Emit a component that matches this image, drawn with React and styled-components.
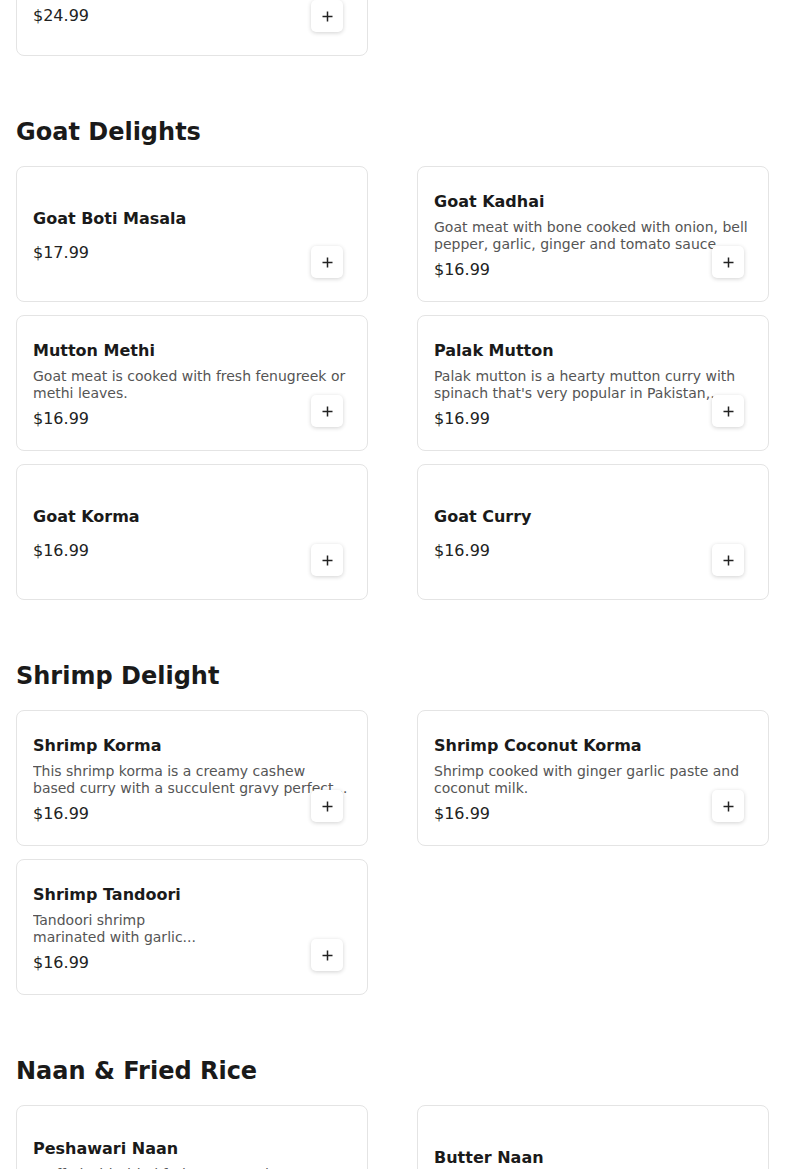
import styled, { createGlobalStyle } from "styled-components";

const GlobalStyle = createGlobalStyle`
  body {
    margin: 0;
    background: #ffffff;
    font-family: "DejaVu Sans", "Liberation Sans", sans-serif;
    color: #1a1a1a;
  }
  #root {
    overflow: hidden;
    height: 100vh;
  }
`;

const menu = [
  {
    title: "Chicken Specials",
    hideTitle: true,
    items: [{ name: "Chicken Tikka Masala Family Platter", desc: "", price: "24.99" }],
  },
  {
    title: "Goat Delights",
    items: [
      { name: "Goat Boti Masala", desc: "", price: "17.99" },
      {
        name: "Goat Kadhai",
        desc: "Goat meat with bone cooked with onion, bell pepper, garlic, ginger and tomato sauce.",
        price: "16.99",
      },
      {
        name: "Mutton Methi",
        desc: "Goat meat is cooked with fresh fenugreek or methi leaves.",
        price: "16.99",
      },
      {
        name: "Palak Mutton",
        desc: "Palak mutton is a hearty mutton curry with spinach that's very popular in Pakistan, Bangladesh and India.",
        price: "16.99",
      },
      { name: "Goat Korma", desc: "", price: "16.99" },
      { name: "Goat Curry", desc: "", price: "16.99" },
    ],
  },
  {
    title: "Shrimp Delight",
    items: [
      {
        name: "Shrimp Korma",
        desc: "This shrimp korma is a creamy cashew based curry with a succulent gravy perfect for rice or naan.",
        price: "16.99",
      },
      {
        name: "Shrimp Coconut Korma",
        desc: "Shrimp cooked with ginger garlic paste and coconut milk.",
        price: "16.99",
      },
      {
        name: "Shrimp Tandoori",
        desc: "Tandoori shrimp marinated with garlic...",
        price: "16.99",
        narrow: true,
      },
    ],
  },
  {
    title: "Naan & Fried Rice",
    items: [
      { name: "Peshawari Naan", desc: "Stuffed with dried fruits, nuts and coconut.", price: "3.99" },
      { name: "Butter Naan", desc: "", price: "2.99" },
    ],
  },
];

const Page = styled.main`
  padding: 0 16px;
  margin-top: -80px;
`;

const Section = styled.section`
  margin-top: ${(p) => (p.$first ? "0" : "62px")};
`;

const Heading = styled.h2`
  margin: 0 0 20px;
  font-size: 24px;
  line-height: 28px;
  font-weight: 700;
  color: #1a1a1a;
`;

const Grid = styled.div`
  display: grid;
  grid-template-columns: 1fr 1fr;
  column-gap: 49px;
  row-gap: 13px;
`;

const Card = styled.div`
  position: relative;
  box-sizing: border-box;
  height: 136px;
  padding: 0 16px;
  border: 1px solid #e4e4e4;
  border-radius: 8px;
  background: #fff;
  display: flex;
  align-items: center;
`;

const Info = styled.div`
  flex: 1;
  min-width: 0;
  padding-top: 2px;
`;

const Name = styled.h3`
  margin: 0 0 8px;
  font-size: 16px;
  line-height: 19px;
  font-weight: 700;
  color: #1a1a1a;
`;

const Desc = styled.p`
  margin: 0 0 7px;
  font-size: 14px;
  line-height: 17px;
  color: #555555;
  max-width: ${(p) => (p.$narrow ? "175px" : "none")};
  display: -webkit-box;
  -webkit-line-clamp: 2;
  -webkit-box-orient: vertical;
  overflow: hidden;
`;

const Price = styled.div`
  font-size: 16px;
  line-height: 19px;
  color: #222;
`;

const AddButton = styled.button`
  position: absolute;
  right: 24px;
  bottom: 23px;
  width: 32px;
  height: 32px;
  padding: 0;
  border: none;
  border-radius: 5px;
  background: #fff;
  box-shadow: 0 1px 4px rgba(0, 0, 0, 0.18);
  display: flex;
  align-items: center;
  justify-content: center;
  cursor: pointer;
`;

const PlusIcon = () => (
  <svg width="11" height="11" viewBox="0 0 11 11">
    <path d="M5.5 0.5v10M0.5 5.5h10" stroke="#222" strokeWidth="1.5" fill="none" />
  </svg>
);

const MenuCard = ({ name, desc, price, narrow }) => (
  <Card>
    <Info>
      <Name>{name}</Name>
      <Desc $narrow={narrow}>{desc}</Desc>
      <Price>${price}</Price>
    </Info>
    <AddButton aria-label={`Add ${name}`}>
      <PlusIcon />
    </AddButton>
  </Card>
);

export default function App() {
  return (
    <>
      <GlobalStyle />
      <Page>
        {menu.map((section, i) => (
          <Section key={section.title} $first={i === 0}>
            {!section.hideTitle && <Heading>{section.title}</Heading>}
            <Grid>
              {section.items.map((item) => (
                <MenuCard key={item.name} {...item} />
              ))}
            </Grid>
          </Section>
        ))}
      </Page>
    </>
  );
}
